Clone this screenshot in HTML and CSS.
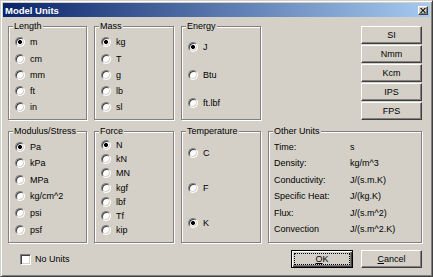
FILE: index.html
```html
<!DOCTYPE html>
<html lang="en">
<head>
    <meta charset="UTF-8">
    <meta name="viewport" content="width=device-width, initial-scale=1.0">
    <title>Model Units</title>
    <link rel="stylesheet" href="styles.css">
</head>
<body>

    <div class="window">
        <!-- Titelleiste -->
        <div class="titlebar">
            <span class="title">Model Units</span>
            <button class="close-button" title="Close">
                <svg width="6" height="5" viewBox="0 0 6 5"><path d="M0 0h1.4L3 1.9 4.6 0H6L3.7 2.5 6 5H4.6L3 3.1 1.4 5H0l2.3-2.5z" fill="#000"/></svg>
            </button>
        </div>

        <div class="content">
            <div class="row row-top">
                <div class="group">
                    <div class="group-title">Length</div>
                    <div class="options opts-length">
                        <label class="opt"><input type="radio" name="length" checked><span>m</span></label>
                        <label class="opt"><input type="radio" name="length"><span>cm</span></label>
                        <label class="opt"><input type="radio" name="length"><span>mm</span></label>
                        <label class="opt"><input type="radio" name="length"><span>ft</span></label>
                        <label class="opt"><input type="radio" name="length"><span>in</span></label>
                    </div>
                </div>

                <div class="group">
                    <div class="group-title">Mass</div>
                    <div class="options opts-length">
                        <label class="opt"><input type="radio" name="mass" checked><span>kg</span></label>
                        <label class="opt"><input type="radio" name="mass"><span>T</span></label>
                        <label class="opt"><input type="radio" name="mass"><span>g</span></label>
                        <label class="opt"><input type="radio" name="mass"><span>lb</span></label>
                        <label class="opt"><input type="radio" name="mass"><span>sl</span></label>
                    </div>
                </div>

                <div class="group">
                    <div class="group-title">Energy</div>
                    <div class="options opts-energy">
                        <label class="opt"><input type="radio" name="energy" checked><span>J</span></label>
                        <label class="opt"><input type="radio" name="energy"><span>Btu</span></label>
                        <label class="opt"><input type="radio" name="energy"><span>ft.lbf</span></label>
                    </div>
                </div>

                <!-- Vorgaben -->
                <div class="presets">
                    <button class="btn">SI</button>
                    <button class="btn">Nmm</button>
                    <button class="btn">Kcm</button>
                    <button class="btn">IPS</button>
                    <button class="btn">FPS</button>
                </div>
            </div>

            <div class="row row-bottom">
                <div class="group">
                    <div class="group-title">Modulus/Stress</div>
                    <div class="options opts-modulus">
                        <label class="opt"><input type="radio" name="modulus" checked><span>Pa</span></label>
                        <label class="opt"><input type="radio" name="modulus"><span>kPa</span></label>
                        <label class="opt"><input type="radio" name="modulus"><span>MPa</span></label>
                        <label class="opt"><input type="radio" name="modulus"><span>kg/cm^2</span></label>
                        <label class="opt"><input type="radio" name="modulus"><span>psi</span></label>
                        <label class="opt"><input type="radio" name="modulus"><span>psf</span></label>
                    </div>
                </div>

                <div class="group">
                    <div class="group-title">Force</div>
                    <div class="options opts-force">
                        <label class="opt"><input type="radio" name="force" checked><span>N</span></label>
                        <label class="opt"><input type="radio" name="force"><span>kN</span></label>
                        <label class="opt"><input type="radio" name="force"><span>MN</span></label>
                        <label class="opt"><input type="radio" name="force"><span>kgf</span></label>
                        <label class="opt"><input type="radio" name="force"><span>lbf</span></label>
                        <label class="opt"><input type="radio" name="force"><span>Tf</span></label>
                        <label class="opt"><input type="radio" name="force"><span>kip</span></label>
                    </div>
                </div>

                <div class="group">
                    <div class="group-title">Temperature</div>
                    <div class="options opts-temp">
                        <label class="opt"><input type="radio" name="temp"><span>C</span></label>
                        <label class="opt"><input type="radio" name="temp"><span>F</span></label>
                        <label class="opt"><input type="radio" name="temp" checked><span>K</span></label>
                    </div>
                </div>

                <div class="group">
                    <div class="group-title">Other Units</div>
                    <div class="options opts-other">
                        <div class="unit-row"><span>Time:</span><span>s</span></div>
                        <div class="unit-row"><span>Density:</span><span>kg/m^3</span></div>
                        <div class="unit-row"><span>Conductivity:</span><span>J/(s.m.K)</span></div>
                        <div class="unit-row"><span>Specific Heat:</span><span>J/(kg.K)</span></div>
                        <div class="unit-row"><span>Flux:</span><span>J/(s.m^2)</span></div>
                        <div class="unit-row"><span>Convection</span><span>J/(s.m^2.K)</span></div>
                    </div>
                </div>
            </div>

            <div class="footer-row">
                <label class="check"><input type="checkbox"><span>No Units</span></label>
                <button class="btn btn-default"><span class="focus"><u>O</u>K</span></button>
                <button class="btn btn-cancel"><u>C</u>ancel</button>
            </div>
        </div>
    </div>

</body>
</html>
```

FILE: styles.css
```css
body {
    margin: 0;
    background-color: #d4d0c8;
    font-family: "Liberation Sans", Arial, sans-serif;
    font-size: 9px;
    color: #000;
}

.window {
    width: 433px;
    height: 277px;
    box-sizing: border-box;
    border: 1px solid;
    border-color: #d4d0c8 #404040 #404040 #d4d0c8;
    box-shadow: inset 1px 1px #fff, inset -1px -1px #808080;
    padding: 2px;
    background-color: #d4d0c8;
}

/* Titelleiste */
.titlebar {
    height: 14px;
    display: flex;
    align-items: center;
    justify-content: space-between;
    padding: 0 2px 0 2px;
    background: linear-gradient(to right, #0a246a, #a6caf0);
}

.title {
    color: #fff;
    font-weight: bold;
    font-size: 9.5px;
}

.close-button {
    width: 10px;
    height: 9px;
    padding: 0;
    box-sizing: border-box;
    display: flex;
    align-items: center;
    justify-content: center;
    background-color: #d4d0c8;
    border: 1px solid;
    border-color: #fff #404040 #404040 #fff;
    box-shadow: inset -1px -1px #808080;
}

.content {
    padding: 0 8px 0 5px;
}

.row {
    display: grid;
    grid-template-columns: 79px 80px 80px 1fr;
    column-gap: 7px;
}

.row-top {
    margin-top: 9px;
    height: 93px;
}

.row-bottom {
    margin-top: 12px;
    height: 112px;
}

/* Gruppenrahmen */
.group {
    border: 1px solid #808080;
    box-shadow: 1px 1px #fff, inset 1px 1px #fff;
}

.group-title {
    width: max-content;
    line-height: 11px;
    height: 11px;
    margin: -6px 0 -5px 4px;
    padding: 0 1px;
    background-color: #d4d0c8;
}

.options {
    padding-left: 6px;
}

.opt {
    display: flex;
    align-items: center;
    gap: 5px;
}

.opts-length { padding-top: 7.2px; }
.opts-length .opt { height: 16.25px; }

.opts-energy { padding-top: 5.5px; }
.opts-energy .opt { height: 28.3px; }

.opts-modulus { padding-top: 6.4px; }
.opts-modulus .opt { height: 16.6px; }

.opts-force { padding-top: 5.9px; }
.opts-force .opt { height: 14.2px; }

.opts-temp { padding-top: 4px; }
.opts-temp .opt { height: 34.7px; }

.opts-other { padding-top: 6.4px; padding-left: 5px; }

.unit-row {
    height: 16.5px;
    display: grid;
    grid-template-columns: 76px 1fr;
    align-items: center;
}

/* Radiobuttons im klassischen Stil */
input[type="radio"] {
    appearance: none;
    margin: 0;
    width: 10px;
    height: 10px;
    box-sizing: border-box;
    border-radius: 50%;
    border: 1px solid;
    border-color: #808080 #fff #fff #808080;
    box-shadow: inset 1px 1px #404040, inset -1px -1px #d4d0c8;
    background-color: #fff;
}

input[type="radio"]:checked {
    background: radial-gradient(circle, #000 0 1.7px, #fff 2.3px);
}

input[type="checkbox"] {
    appearance: none;
    margin: 0;
    width: 11px;
    height: 11px;
    box-sizing: border-box;
    border: 1px solid;
    border-color: #808080 #fff #fff #808080;
    box-shadow: inset 1px 1px #404040, inset -1px -1px #d4d0c8;
    background-color: #fff;
}

/* Buttons */
.presets {
    display: flex;
    flex-direction: column;
    align-items: flex-end;
    gap: 1px;
}

.btn {
    width: 61px;
    height: 18px;
    padding: 0;
    box-sizing: border-box;
    font-family: inherit;
    font-size: 9px;
    color: #000;
    background-color: #d4d0c8;
    border: 1px solid;
    border-color: #fff #404040 #404040 #fff;
    box-shadow: inset -1px -1px #808080;
}

.footer-row {
    margin-top: 7px;
    display: flex;
    align-items: center;
}

.check {
    display: flex;
    align-items: center;
    gap: 4px;
    margin-left: 12px;
    margin-right: auto;
}

.btn-default {
    width: 62px;
    padding: 2px;
    border: 1px solid #000;
    box-shadow: inset 1px 1px #fff, inset -1px -1px #404040, inset -2px -2px #808080;
}

.btn-default .focus {
    display: flex;
    align-items: center;
    justify-content: center;
    width: 100%;
    height: 100%;
    box-sizing: border-box;
    border: 1px dotted #000;
}

.btn-cancel {
    margin-left: 8px;
}
```
